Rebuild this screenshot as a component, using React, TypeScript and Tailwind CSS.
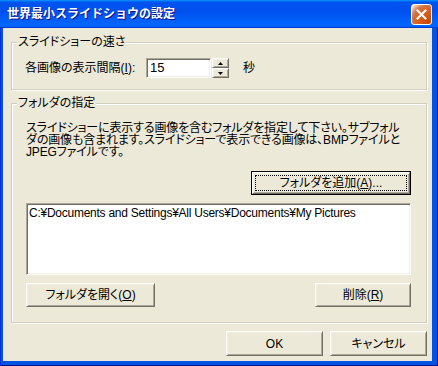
const font = "font-['Liberation_Sans','Noto_Sans_CJK_JP',sans-serif] [font-feature-settings:'palt']"

const raised =
  "bg-[#ECE9D8] border border-t-white border-l-white border-r-[#716F64] border-b-[#716F64] shadow-[inset_1px_1px_0_#F1EFE2,inset_-1px_-1px_0_#ACA899]"

const sunken =
  "bg-white border border-t-[#ACA899] border-l-[#ACA899] border-r-white border-b-white shadow-[inset_1px_1px_0_#716F64,inset_-1px_-1px_0_#F1EFE2]"

function Btn({ children, className = "" }: { children: React.ReactNode; className?: string }) {
  return (
    <button className={`${raised} flex items-center justify-center text-[12px] leading-[14px] text-black ${className}`}>
      {children}
    </button>
  )
}

function Group({ title, children, className = "" }: { title: string; children: React.ReactNode; className?: string }) {
  return (
    <fieldset
      className={`border border-[#D0D0BF] shadow-[inset_1px_1px_0_white,1px_1px_0_white] ${className}`}
    >
      <legend className="ml-[5px] px-[1px] bg-[#ECE9D8] text-[12px] leading-[14px]">{title}</legend>
      {children}
    </fieldset>
  )
}

function Arrow({ up }: { up?: boolean }) {
  return (
    <svg width="5" height="3" viewBox="0 0 5 3" className="block">
      <polygon points={up ? "2.5,0 5,3 0,3" : "0,0 5,0 2.5,3"} fill="#000" />
    </svg>
  )
}

export default function App() {
  return (
    <div
      className={`w-[438px] h-[366px] flex flex-col bg-[#0054E3] shadow-[inset_1px_0_0_#0831d9,inset_-1px_-1px_0_#00138c] ${font} text-black`}
    >
      <div className="h-[28px] shrink-0 flex items-center justify-between pl-[7px] pr-[6px] bg-[linear-gradient(180deg,#0997ff,#0053ee_8%,#0050ee_40%,#0066ff_88%,#0066ff_93%,#005bff_95%,#003dd7_96%,#003dd7)]">
        <span className="text-white font-bold text-[12px] [font-feature-settings:normal] [text-shadow:1px_1px_#0f1089]">
          世界最小スライドショウの設定
        </span>
        <button className="w-[21px] h-[21px] rounded-[3px] border border-white flex items-center justify-center bg-[radial-gradient(circle_at_90%_90%,#cc4600_0%,#dc6527_55%,#cd7546_70%,#ffccb2_90%,#ffffff_100%)]">
          <svg width="11" height="11" viewBox="0 0 11 11">
            <path d="M1.5 1.5 L9.5 9.5 M9.5 1.5 L1.5 9.5" stroke="white" strokeWidth="2" strokeLinecap="square" />
          </svg>
        </button>
      </div>

      <div className="flex-1 ml-[3px] mr-[6px] mb-[5px] bg-[#ECE9D8] flex flex-col pl-[8px] pr-[5px] pt-[7px]">
        <Group title="スライドショーの速さ">
          <div className="flex items-center pl-[13px] pt-[9px] pb-[11px] text-[12px]">
            <span className="w-[121px]">
              各画像の表示間隔(<u>I</u>):
            </span>
            <div className={`${sunken} w-[65px] h-[20px] flex items-center pl-[3px] text-[13px]`}>15</div>
            <div className="flex flex-col ml-[1px]">
              <div className={`${raised} w-[17px] h-[10px] flex items-center justify-center`}>
                <Arrow up />
              </div>
              <div className={`${raised} w-[17px] h-[10px] flex items-center justify-center`}>
                <Arrow />
              </div>
            </div>
            <span className="ml-[14px]">秒</span>
          </div>
        </Group>

        <Group title="フォルダの指定" className="mt-[6px]">
          <div className="flex flex-col pl-[14px] pr-[15px] pt-[12px] pb-[15px] text-[12px]">
            <p className="leading-[12px] whitespace-nowrap tracking-[-0.15px]">
              スライドショーに表示する画像を含むフォルダを指定して下さい。サブフォル
              <br />
              ダの画像も含まれます。スライドショーで表示できる画像は、BMPファイルと
              <br />
              JPEGファイルです。
            </p>
            <div className="self-end mt-[13px] w-[160px] h-[24px] border border-black">
              <div className={`${raised} h-full p-[2px]`}>
                <div className="h-full border border-dotted border-black flex items-center justify-center leading-[14px]">
                  フォルダを追加(<u>A</u>)...
                </div>
              </div>
            </div>
            <div className={`${sunken} mt-[8px] h-[72px] px-[2px] pt-[2px]`}>
              <div className="leading-[14px] whitespace-nowrap tracking-[-0.25px]">
                C:¥Documents and Settings¥All Users¥Documents¥My Pictures
              </div>
            </div>
            <div className="flex justify-between mt-[8px]">
              <Btn className="w-[129px] h-[24px]">
                フォルダを開く(<u>O</u>)
              </Btn>
              <Btn className="w-[96px] h-[24px]">
                削除(<u>R</u>)
              </Btn>
            </div>
          </div>
        </Group>

        <div className="flex justify-end gap-[7px] mt-[8px]">
          <Btn className="w-[97px] h-[25px]">OK</Btn>
          <Btn className="w-[97px] h-[25px]">キャンセル</Btn>
        </div>
      </div>
    </div>
  )
}
